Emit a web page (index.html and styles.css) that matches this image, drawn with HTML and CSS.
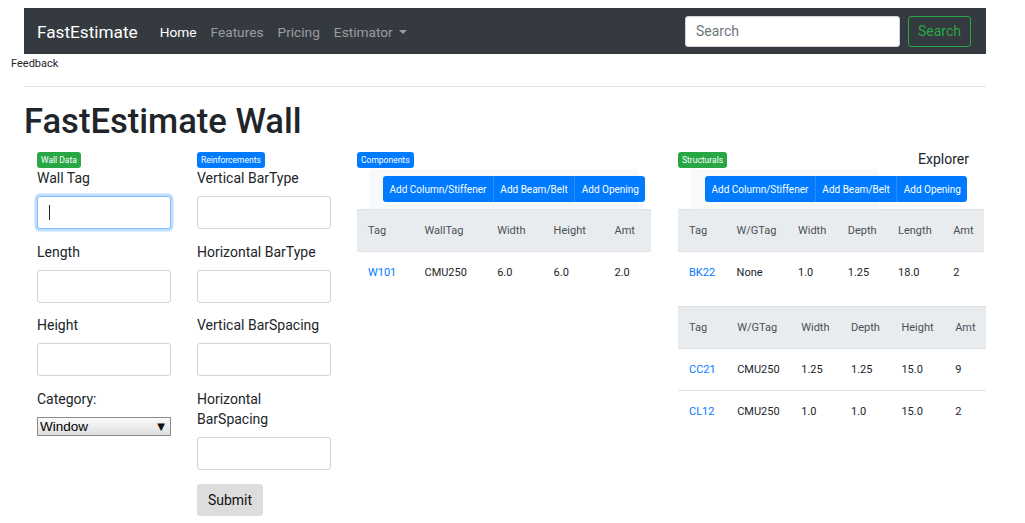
FILE: index.html
```html
<!DOCTYPE html>
<html lang="en">
<head>
<meta charset="utf-8">
<title>FastEstimate Wall</title>
<link rel="stylesheet" href="styles.css">
</head>
<body>
<div class="wrap">
  <nav class="navbar">
    <a class="brand" href="#">FastEstimate</a>
    <ul class="nav">
      <li class="nav-item active">Home</li>
      <li class="nav-item">Features</li>
      <li class="nav-item">Pricing</li>
      <li class="nav-item dropdown">Estimator <span class="caret"></span></li>
    </ul>
    <form class="search">
      <input class="search-input" type="text" placeholder="Search">
      <button class="btn-outline" type="button">Search</button>
    </form>
  </nav>
</div>
<div class="feedback">Feedback</div>
<div class="wrap">
  <hr class="rule">
  <h1 class="title">FastEstimate Wall</h1>
  <div class="grid">
    <div class="col col-a">
      <span class="badge green">Wall Data</span>
      <div class="group">
        <label class="lbl">Wall Tag</label>
        <input class="field focused" type="text">
      </div>
      <div class="group">
        <label class="lbl">Length</label>
        <input class="field" type="text">
      </div>
      <div class="group">
        <label class="lbl">Height</label>
        <input class="field" type="text">
      </div>
      <div class="group">
        <label class="lbl">Category:</label>
        <div class="select-wrap">
          <select class="select"><option>Window</option></select>
        </div>
      </div>
    </div>
    <div class="col col-a">
      <span class="badge blue">Reinforcements</span>
      <div class="group">
        <label class="lbl">Vertical BarType</label>
        <input class="field" type="text">
      </div>
      <div class="group">
        <label class="lbl">Horizontal BarType</label>
        <input class="field" type="text">
      </div>
      <div class="group">
        <label class="lbl">Vertical BarSpacing</label>
        <input class="field" type="text">
      </div>
      <div class="group">
        <label class="lbl">Horizontal BarSpacing</label>
        <input class="field" type="text">
      </div>
      <button class="submit" type="button">Submit</button>
    </div>
    <div class="col col-c">
      <div class="head-row"><span class="badge blue">Components</span></div>
      <div class="toolbar toolbar-c">
        <div class="btn-group">
          <button class="btn" type="button">Add Column/Stiffener</button>
          <button class="btn" type="button">Add Beam/Belt</button>
          <button class="btn" type="button">Add Opening</button>
        </div>
      </div>
      <table class="table t1">
        <thead><tr><th>Tag</th><th>WallTag</th><th>Width</th><th>Height</th><th>Amt</th></tr></thead>
        <tbody><tr><td><a class="link" href="#">W101</a></td><td>CMU250</td><td>6.0</td><td>6.0</td><td>2.0</td></tr></tbody>
      </table>
    </div>
    <div class="col col-d">
      <div class="head-row"><span class="badge green">Structurals</span><span class="explorer">Explorer</span></div>
      <div class="toolbar toolbar-d">
        <div class="btn-group">
          <button class="btn" type="button">Add Column/Stiffener</button>
          <button class="btn" type="button">Add Beam/Belt</button>
          <button class="btn" type="button">Add Opening</button>
        </div>
      </div>
      <table class="table t2">
        <thead><tr><th>Tag</th><th>W/GTag</th><th>Width</th><th>Depth</th><th>Length</th><th>Amt</th></tr></thead>
        <tbody><tr><td><a class="link" href="#">BK22</a></td><td>None</td><td>1.0</td><td>1.25</td><td>18.0</td><td>2</td></tr></tbody>
      </table>
      <table class="table t3">
        <thead><tr><th>Tag</th><th>W/GTag</th><th>Width</th><th>Depth</th><th>Height</th><th>Amt</th></tr></thead>
        <tbody>
          <tr><td><a class="link" href="#">CC21</a></td><td>CMU250</td><td>1.25</td><td>1.25</td><td>15.0</td><td>9</td></tr>
          <tr><td><a class="link" href="#">CL12</a></td><td>CMU250</td><td>1.0</td><td>1.0</td><td>15.0</td><td>2</td></tr>
        </tbody>
      </table>
    </div>
  </div>
</div>
</body>
</html>
```
FILE: styles.css
```css
* { box-sizing: border-box; }
html, body { margin: 0; padding: 0; background: #fff; }
body {
  font-family: Roboto, "Noto Sans", "Liberation Sans", sans-serif;
  color: #212529;
  font-size: 14px;
  line-height: 20px;
}
.wrap { width: 962px; margin-left: 24px; }

/* navbar */
.navbar {
  margin-top: 8px;
  height: 46px;
  background: #343a40;
  display: flex;
  align-items: center;
  padding: 0 15px 0 13px;
}
.brand {
  color: #fff;
  text-decoration: none;
  font-size: 17.2px;
  line-height: 24px;
  margin-right: 15px;
  margin-top: 2px;
}
.nav {
  list-style: none;
  margin: 2px 0 0;
  padding: 0;
  display: flex;
  flex: 1;
}
.nav-item {
  color: rgba(255,255,255,.5);
  font-size: 13.7px;
  padding: 0 7px;
  line-height: 20px;
  display: flex;
  align-items: center;
}
.nav-item.active { color: #fff; }
.caret {
  display: inline-block;
  margin-left: 6px;
  border-top: 4px solid rgba(255,255,255,.5);
  border-left: 4px solid transparent;
  border-right: 4px solid transparent;
  width: 0;
  height: 0;
}
.search { display: flex; gap: 8px; margin: 0; }
.search-input {
  width: 215px;
  height: 31px;
  border: 1px solid #ced4da;
  border-radius: 3px;
  padding: 0 10px;
  font-family: inherit;
  font-size: 14px;
  color: #495057;
}
.search-input::placeholder { color: #6c757d; }
.btn-outline {
  height: 31px;
  padding: 0 9px;
  background: transparent;
  border: 1px solid #28a745;
  color: #28a745;
  border-radius: 3px;
  font-family: inherit;
  font-size: 14px;
}

.feedback {
  font-size: 11px;
  line-height: 13px;
  padding-left: 11px;
  margin-top: 3px;
  color: #212529;
}
.rule {
  margin: 16px 0 0;
  border: 0;
  border-top: 1px solid rgba(0,0,0,.1);
}
.title {
  margin: 15px 0 12px;
  font-size: 34.6px;
  line-height: 38px;
  font-weight: 500;
}

.grid { display: flex; padding-left: 13px; }
.col { display: flex; flex-direction: column; align-items: flex-start; }
.col-a { width: 160px; }
.col-c { width: 321px; }
.col-d { width: 308px; }

.badge {
  display: inline-block;
  color: #fff;
  font-size: 8.5px;
  font-weight: 400;
  line-height: 16px;
  height: 16px;
  padding: 0 4px;
  border-radius: 3px;
}
.green { background: #28a745; }
.blue { background: #007bff; }

.group { margin-bottom: 12.5px; width: 134px; }
.lbl {
  display: block;
  font-size: 14px;
  line-height: 20px;
  margin-bottom: 8px;
}
.field {
  display: block;
  width: 134px;
  height: 33px;
  border: 1px solid #ced4da;
  border-radius: 3px;
  background: #fff;
  font-family: inherit;
}
.field.focused {
  border-color: #80bdff;
  box-shadow: 0 0 0 2.5px rgba(0,123,255,.25);
  background: linear-gradient(#212529, #212529) no-repeat 11px center / 1px 15px, #fff;
}
.select-wrap { position: relative; width: 134px; margin-top: 1.5px; }
.select {
  display: block;
  appearance: none;
  -webkit-appearance: none;
  width: 134px;
  height: 19px;
  border: 1px solid #8a8a8a;
  border-radius: 0;
  background: linear-gradient(#fbfbfb, #dedede);
  font-family: "Liberation Sans", Arial, sans-serif;
  font-size: 13.5px;
  color: #000;
  padding: 0 2px;
  margin: 0;
}
.select-wrap::after {
  content: "\25BC";
  position: absolute;
  right: 6px;
  top: 2px;
  font-family: "DejaVu Sans", sans-serif;
  font-size: 10px;
  line-height: 15px;
  color: #111;
  pointer-events: none;
}
.submit {
  width: 66px;
  height: 32px;
  border: 0;
  border-radius: 3px;
  background: #dddddd;
  color: #111;
  font-family: inherit;
  font-size: 14px;
  margin-top: 2px;
}

.head-row { display: flex; justify-content: space-between; align-items: flex-start; height: 17px; width: 100%; }
.explorer { font-size: 14px; line-height: 14px; padding-right: 17px; margin-top: 0; }
.toolbar {
  height: 40px;
  background: #f8f9fa;
  padding: 7px 0 0 14px;
}
.toolbar-c { margin-left: 12px; width: 270px; }
.toolbar-d { margin-left: 13px; width: 188px; }
.btn-group { display: flex; width: max-content; }
.btn {
  background: #007bff;
  color: #fff;
  border: 0;
  height: 26px;
  padding: 0 6.5px;
  font-family: inherit;
  font-size: 10px;
  border-left: 1px solid #2a8cf7;
}
.btn:first-child { border-radius: 3px 0 0 3px; border-left: 0; }
.btn:last-child { border-radius: 0 3px 3px 0; }

.table {
  border-collapse: collapse;
  font-size: 11px;
  line-height: 17px;
  margin-bottom: 13px;
}
.t1 { width: 294px; }
.t2 { width: 306px; }
.t3 { width: 308px; }
.table th, .table td {
  text-align: left;
  padding: 12px 10px 12px 11px;
  white-space: nowrap;
}
.table th {
  font-weight: 400;
  color: #495057;
  background: #e9ecef;
  border-top: 1px solid #dee2e6;
  border-bottom: 1px solid #dee2e6;
}
.table tbody tr + tr td { border-top: 1px solid #dee2e6; }
.link { color: #007bff; text-decoration: none; }
```
